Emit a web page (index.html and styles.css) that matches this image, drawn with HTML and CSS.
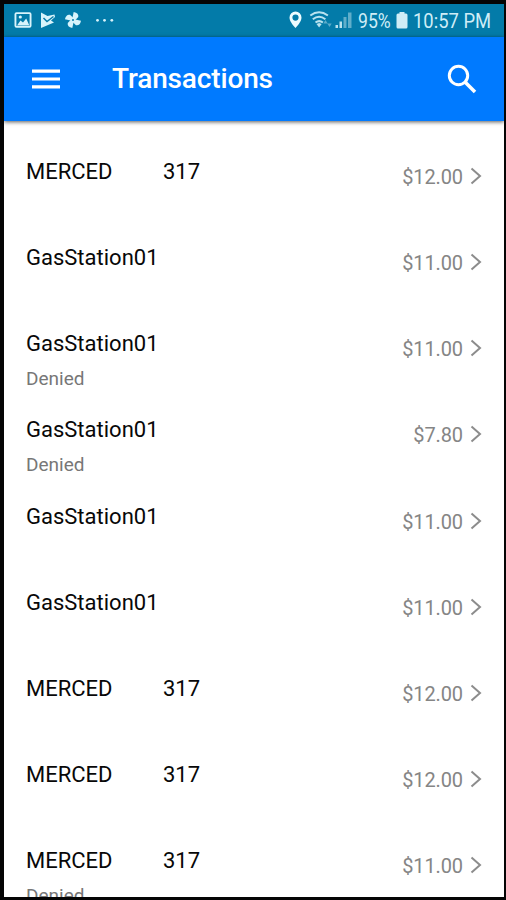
FILE: index.html
```html
<!DOCTYPE html>
<html lang="en">
<head>
<meta charset="utf-8">
<title>Transactions</title>
<link rel="stylesheet" href="styles.css">
</head>
<body>
<div class="phone">
  <div class="status">
    <svg class="status-left" width="110" height="33" viewBox="4 4 110 33" fill="#d8f3fb">
      <path fill-rule="evenodd" d="M16.500 12.200h13a2 2 0 0 1 2 2v11.600a2 2 0 0 1-2 2h-13a2 2 0 0 1-2-2V14.200a2 2 0 0 1 2-2zM16.400 14v12h13.200V14z"/>
      <path d="M17 25.500l3.500-5 2.500 2 3.200-4 3.200 7z"/><circle cx="20.300" cy="17" r="1.600"/>
      <path d="M41 12.500l6.500 3.500L54.500 14.500 55 17l-4 3.500 3 2L41 28z"/>
      <path d="M43.500 18l3.500 3.500 6.500-5" fill="none" stroke="#087ca9" stroke-width="1.500"/>
      <g transform="rotate(12 73 20)"><path d="M72 20v-8q5.500 0 5.500 4l-2.500 4z"/><path d="M73 19h8q0 5.500-4 5.500l-4-2.500z"/><path d="M74 20v8q-5.500 0-5.500-4l2.500-4z"/><path d="M73 21h-8q0-5.500 4-5.500l4 2.500z"/></g><circle cx="73" cy="20" r="1" fill="#087ca9"/>
      <circle cx="97.500" cy="20.300" r="1.400"/><circle cx="104.500" cy="20.300" r="1.400"/><circle cx="111.800" cy="20.300" r="1.400"/>
    </svg>
    <div class="status-right">
      <svg width="66" height="33" viewBox="288 4 66 33">
        <path fill="#ecfbff" fill-rule="evenodd" d="M295.500 11.500a6 6 0 0 1 6 6c0 3.500-3 7.300-6 10.500-3-3.200-6-7-6-10.500a6 6 0 0 1 6-6zm0 3a3.100 3.100 0 1 0 0 6.200 3.100 3.100 0 0 0 0-6.200z"/>
        <g fill="none" stroke="#b9e2ef" stroke-width="2"><path d="M310.300 15.500q8.800-6.500 17.600 0M312.800 19.200q6.300-5 12.600 0M315.500 22.500q3.700-2.800 7.400 0"/></g>
        <path fill="#b9e2ef" d="M316.500 24l2.600-1 2.600 1-2.600 3.500z"/>
        <path fill="#5dabc9" d="M325.500 20l2.200 3.500h-4.400zM329.500 27l-2.200-3.500h4.400z"/>
        <path fill="#b9e2ef" d="M335.500 25h2.500v3h-2.500zM339.500 21.500h2.500V28h-2.500z"/>
        <path fill="#60aeca" d="M343.500 17h3v11h-3zM348 12.500h3.500V28H348z"/>
      </svg>
      <span class="battery-text">95%</span>
      <svg class="battery" width="12" height="33" viewBox="0 0 12 33" fill="#d0edf6"><path d="M3.500 8h5v1.500h1.500q1.500 0 1.500 1.500v12q0 1.500-1.500 1.500H2q-1.500 0-1.500-1.500V11Q.500 9.500 2 9.500h1.500z"/></svg>
      <span class="clock">10:57 PM</span>
    </div>
  </div>
  <header class="appbar">
    <svg width="30" height="22" viewBox="0 0 30 22" fill="#fff"><path d="M1 1.500h28v3.200H1zM1 9.400h28v3.200H1zM1 17.200h28v3.200H1z"/></svg>
    <h1>Transactions</h1>
    <svg class="search" width="30" height="30" viewBox="0 0 30 30" fill="none" stroke="#fff" stroke-width="3"><circle cx="11.500" cy="11.500" r="9.200"/><path d="M18 18l10 10" stroke-width="3.600"/></svg>
  </header>
  <main class="list">
    <div class="row"><div><p class="name merced"><span>MERCED</span><span>317</span></p></div><span class="amount">$12.00</span><svg class="chev" viewBox="0 0 12 18"><path d="M1.500 1.500L10 9l-8.500 7.500"/></svg></div>
    <div class="row"><div><p class="name">GasStation01</p></div><span class="amount">$11.00</span><svg class="chev" viewBox="0 0 12 18"><path d="M1.500 1.500L10 9l-8.500 7.500"/></svg></div>
    <div class="row"><div><p class="name">GasStation01</p><p class="note">Denied</p></div><span class="amount">$11.00</span><svg class="chev" viewBox="0 0 12 18"><path d="M1.500 1.500L10 9l-8.500 7.500"/></svg></div>
    <div class="row"><div><p class="name">GasStation01</p><p class="note">Denied</p></div><span class="amount">$7.80</span><svg class="chev" viewBox="0 0 12 18"><path d="M1.500 1.500L10 9l-8.500 7.500"/></svg></div>
    <div class="row"><div><p class="name">GasStation01</p></div><span class="amount">$11.00</span><svg class="chev" viewBox="0 0 12 18"><path d="M1.500 1.500L10 9l-8.500 7.500"/></svg></div>
    <div class="row"><div><p class="name">GasStation01</p></div><span class="amount">$11.00</span><svg class="chev" viewBox="0 0 12 18"><path d="M1.500 1.500L10 9l-8.500 7.500"/></svg></div>
    <div class="row"><div><p class="name merced"><span>MERCED</span><span>317</span></p></div><span class="amount">$12.00</span><svg class="chev" viewBox="0 0 12 18"><path d="M1.500 1.500L10 9l-8.500 7.500"/></svg></div>
    <div class="row"><div><p class="name merced"><span>MERCED</span><span>317</span></p></div><span class="amount">$12.00</span><svg class="chev" viewBox="0 0 12 18"><path d="M1.500 1.500L10 9l-8.500 7.500"/></svg></div>
    <div class="row"><div><p class="name merced"><span>MERCED</span><span>317</span></p><p class="note">Denied</p></div><span class="amount">$11.00</span><svg class="chev" viewBox="0 0 12 18"><path d="M1.500 1.500L10 9l-8.500 7.500"/></svg></div>
  </main>
</div>
</body>
</html>
```
FILE: styles.css
```css
* { box-sizing: border-box; }
body { margin: 0; font-family: Roboto, sans-serif; background: #000; }
.phone {
  width: 506px;
  height: 900px;
  border: solid #050505;
  border-width: 4px 2px 3px 4px;
  background: #fff;
  overflow: hidden;
  display: flex;
  flex-direction: column;
}
.status {
  height: 33px;
  flex: none;
  background: #037ba9;
  display: flex;
  justify-content: space-between;
  color: #cfedf7;
  font-size: 20px;
  line-height: 34px;
}
.status svg { display: block; flex: none; }
.status-right { display: flex; width: 216px; white-space: nowrap; }
.battery-text { width: 38px; margin-left: 4px; transform: scaleX(.88); transform-origin: left; }
.clock { margin-left: 5px; transform: scaleX(.92); transform-origin: left; }
.appbar {
  height: 84px;
  flex: none;
  background: #007aff;
  box-shadow: 0 1px 4px rgba(0, 0, 0, .65);
  display: flex;
  align-items: center;
  padding: 0 27px;
  z-index: 1;
}
h1 {
  margin: 0 0 0 51px;
  color: #fff;
  font-size: 28px;
  font-weight: 500;
  line-height: 34px;
  letter-spacing: -.15px;
}
.search { margin-left: auto; }
.list { flex: 1; min-height: 0; padding-top: 36px; overflow: hidden; }
.row { height: 86.125px; display: flex; padding: 0 22px; }
.row > div { flex: 1; }
p { margin: 0; white-space: nowrap; }
.name { font-size: 22px; line-height: 28px; padding-top: 1px; color: #080808; }
.merced { display: flex; }
.merced span:first-child { width: 137px; }
.note { font-size: 19px; line-height: 24px; margin-top: 9px; color: #777; }
.amount { font-size: 20px; line-height: 28px; margin-top: 6px; color: #858585; letter-spacing: -.1px; }
.chev {
  width: 12px;
  height: 18px;
  margin: 10px 0 0 7px;
  fill: none;
  stroke: #8c8c8c;
  stroke-width: 2;
}
```
